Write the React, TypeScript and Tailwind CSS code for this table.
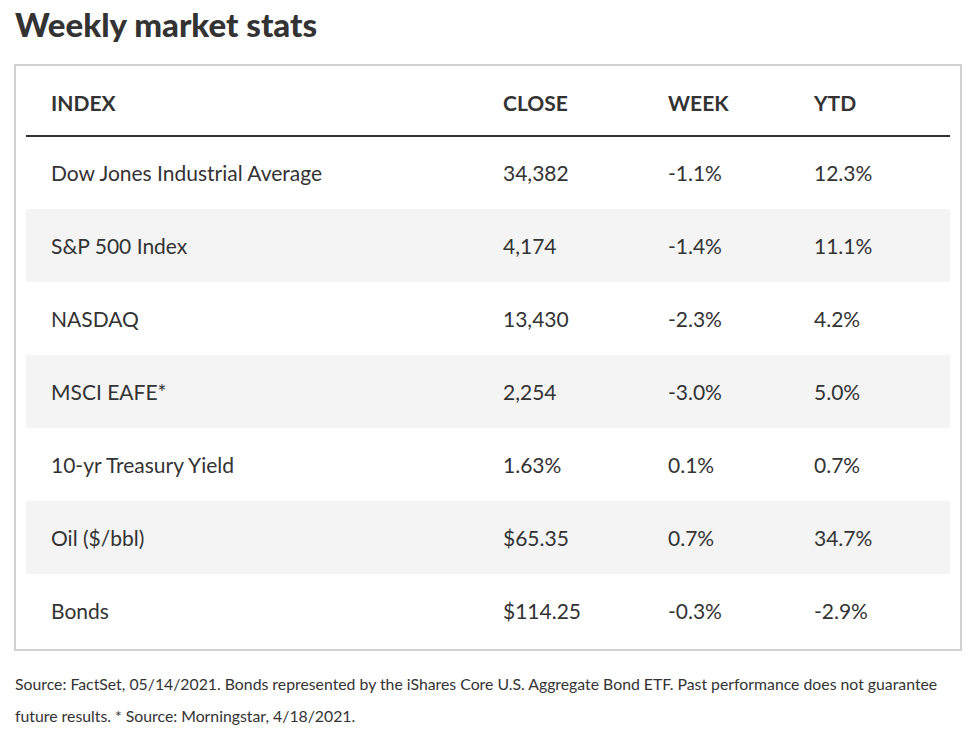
const rows = [
  ["Dow Jones Industrial Average", "34,382", "-1.1%", "12.3%"],
  ["S&P 500 Index", "4,174", "-1.4%", "11.1%"],
  ["NASDAQ", "13,430", "-2.3%", "4.2%"],
  ["MSCI EAFE*", "2,254", "-3.0%", "5.0%"],
  ["10-yr Treasury Yield", "1.63%", "0.1%", "0.7%"],
  ["Oil ($/bbl)", "$65.35", "0.7%", "34.7%"],
  ["Bonds", "$114.25", "-0.3%", "-2.9%"],
];

export default function App() {
  return (
    <div
      className="min-h-screen bg-white px-[14px] pt-[4px] text-[#333333]"
      style={{ fontFamily: "Lato, 'Open Sans', sans-serif" }}
    >
      {/* Title */}
      <h2 className="text-[33px] font-black leading-[40px] pl-[1px]">Weekly market stats</h2>

      {/* Table box */}
      <div className="mt-[20px] w-[948px] border-2 border-[#d2d2d2] px-[10px] pb-[2px]">
        <table className="w-full border-collapse">
          <thead>
            <tr className="h-[70px] border-b-2 border-[#333333] text-left text-[21px] font-black uppercase">
              <th className="w-[452px] pl-[25px] pt-[4px]">Index</th>
              <th className="w-[165px] pl-[25px] pt-[4px]">Close</th>
              <th className="w-[146px] pl-[25px] pt-[4px]">Week</th>
              <th className="pl-[25px] pt-[4px]">YTD</th>
            </tr>
          </thead>
          <tbody>
            {rows.map((r, i) => (
              <tr
                key={r[0]}
                className={`h-[73px] text-[21px] ${i % 2 === 1 ? "bg-[#f4f4f4]" : ""}`}
              >
                {r.map((c) => (
                  <td key={c} className="pl-[25px]">
                    {c}
                  </td>
                ))}
              </tr>
            ))}
          </tbody>
        </table>
      </div>

      {/* Footnote */}
      <p className="mt-[17px] w-[950px] pl-[1px] text-[15.8px] leading-[32px]">
        Source: FactSet, 05/14/2021. Bonds represented by the iShares Core U.S. Aggregate Bond ETF. Past performance does not guarantee future results. * Source: Morningstar, 4/18/2021.
      </p>
    </div>
  );
}
